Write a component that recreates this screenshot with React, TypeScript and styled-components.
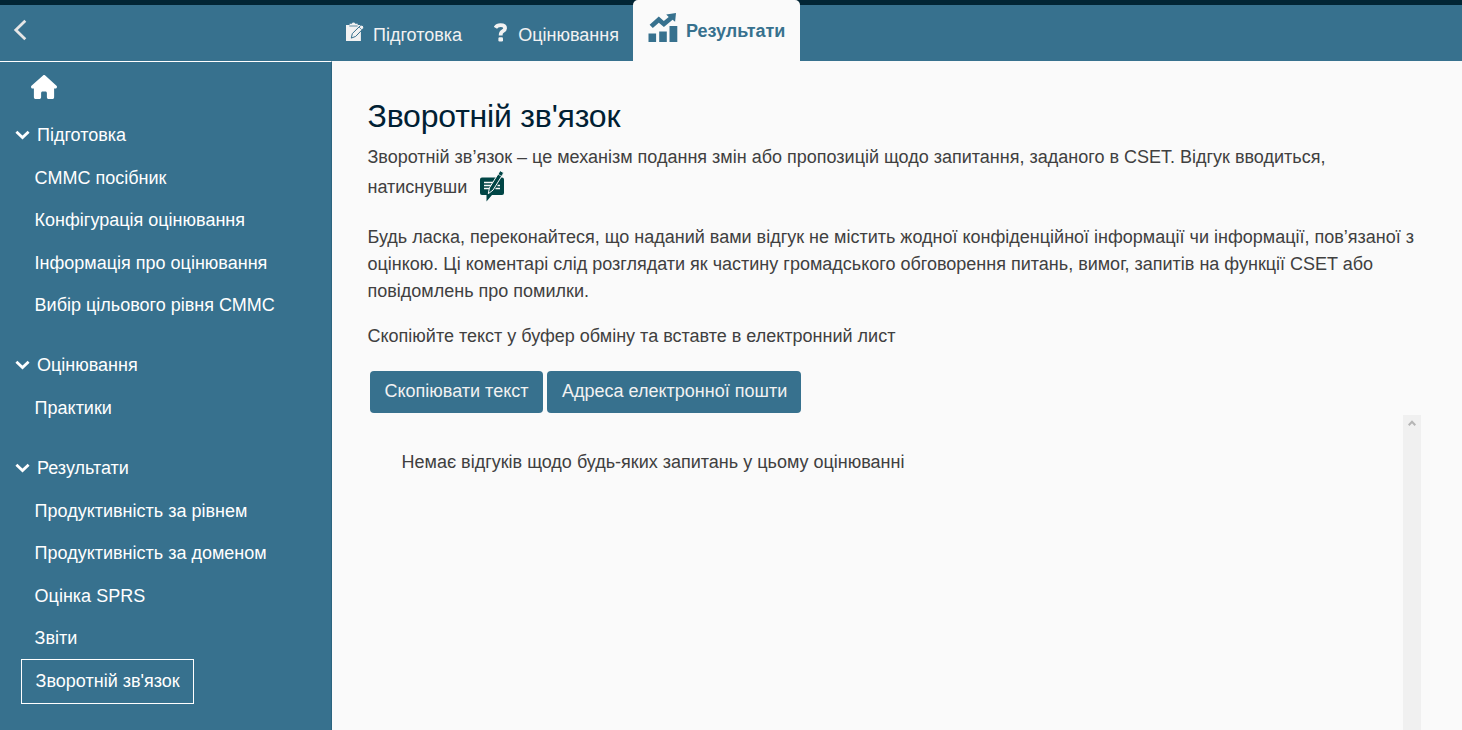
import React from 'react';
import styled, { createGlobalStyle, css } from 'styled-components';
import { FaHouse } from 'react-icons/fa6';

const teal = '#37718e';
const ink = '#002033';
const paper = '#fafafa';

const GlobalStyle = createGlobalStyle`
  *, *::before, *::after { box-sizing: border-box; }
  body {
    margin: 0;
    background: ${paper};
    color: #404040;
    font: 18px/27px "Liberation Sans", Arial, sans-serif;
    overflow: hidden;
  }
`;

const Page = styled.div`
  display: flex;
  flex-direction: column;
  height: 730px;
`;

const Header = styled.header`
  display: flex;
  flex: none;
  height: 61px;
  background: linear-gradient(#022534 5px, ${teal} 5px);
`;

const BackArea = styled.div`
  width: 332px;
  padding: 19px 0 0 13px;
`;

const TabIcon = styled.span<{ $width: number; $inset?: number }>`
  display: flex;
  width: ${(p) => p.$width}px;
  padding: 0 0 7px ${(p) => p.$inset ?? 0}px;
`;

const Tab = styled.div<{ $active?: boolean }>`
  display: flex;
  align-items: center;
  height: 61px;
  padding: 10px 14px 0;
  color: #f2f2f2;
  white-space: nowrap;
  ${(p) =>
    p.$active &&
    css`
      padding: 2px 15px 0;
      background: ${paper};
      border-radius: 5px 5px 0 0;
      color: ${teal};
      font-weight: 700;
    `}
`;

const Body = styled.div`
  display: flex;
  flex: 1;
  min-height: 0;
`;

const Sidebar = styled.nav`
  flex: none;
  width: 332px;
  background: ${teal};
  border-top: 1px solid #fff;
  border-right: 1px solid #2b647f;
  color: #fff;
`;

const HomeLink = styled.div`
  height: 52px;
  padding: 13px 0 0 31px;

  svg {
    display: block;
    width: 26px;
    height: 24px;
  }
`;

const Group = styled.section`
  margin-bottom: 17.75px;
`;

const GroupTitle = styled.div`
  display: flex;
  align-items: center;
  gap: 7px;
  height: 42.5px;
  padding-left: 15px;
`;

const NavItem = styled.div<{ $selected?: boolean }>`
  display: flex;
  align-items: center;
  width: max-content;
  height: 42.5px;
  margin-left: 21px;
  padding: 0.5px 14px 0 13.6px;
  ${(p) =>
    p.$selected &&
    css`
      height: 45px;
      margin-top: -0.5px;
      padding: 0 13.4px 0 13.6px;
      border: 1px solid #fff;
    `}
`;

const Main = styled.main`
  display: flex;
  flex: 1;
  flex-direction: column;
  min-width: 0;
  padding: 36px 41px 0 35.5px;
`;

const Title = styled.h1`
  margin: 0 0 9px;
  color: ${ink};
  font-size: 32px;
  font-weight: 400;
  letter-spacing: -0.2px;
  line-height: 38px;
`;

const Paragraph = styled.p<{ $gap?: number }>`
  margin: 0 0 ${(p) => p.$gap ?? 18}px;
`;

const Actions = styled.div`
  display: flex;
  gap: 4px;
  padding-left: 2px;
`;

const Button = styled.button`
  height: 42px;
  padding: 0 14px 2px 14.5px;
  border: 0;
  border-radius: 4px;
  background: ${teal};
  color: #f2f2f2;
  font: inherit;
  white-space: nowrap;

  &:first-child {
    padding: 0 15px 2px;
  }
`;

const ResultPane = styled.div`
  display: flex;
  flex: 1;
  justify-content: space-between;
  margin-top: 2px;
`;

const EmptyMessage = styled.div`
  padding: 34px 0 0 34px;
`;

const ScrollTrack = styled.div`
  display: flex;
  justify-content: center;
  width: 18px;
  padding-top: 5px;
  background: #f0f0f0;
`;

const InlineSvg = styled.svg`
  margin-left: 8px;
  vertical-align: -9px;
`;

const Block = styled.svg`
  display: block;
  flex: none;
`;

const BackIcon = () => (
  <Block width="14" height="22" viewBox="0 0 14 22" fill="none" stroke="#e6e6e6" strokeWidth="2.8">
    <path d="M12.3 1.7 2.8 11l9.5 9.3" />
  </Block>
);

const Chevron = () => (
  <Block width="15" height="11" viewBox="0 0 15 11" fill="none" stroke="#fff" strokeWidth="2.8">
    <path d="m1.4 1.7 6.1 5.8 6.1-5.8" />
  </Block>
);

const ClipboardIcon = () => (
  <Block width="19" height="20" viewBox="0 0 19 20">
    <path fill="#f2f2f2" d="M0 3h3.6V1.8h2.2Q6.2.4 7.5.4t1.8 1.4h2.4V3h3.2v16H0z" />
    <path fill="none" stroke={teal} strokeWidth=".8" d="M3.3 4h8.3" />
    <path
      fill="#f2f2f2"
      stroke={teal}
      strokeWidth="1"
      d="m5.3 16.1 1-4.5 7.9-7.8q1.7-1.4 3 0t0 2.8l-7.5 7.8z"
    />
    <path fill="none" stroke={teal} strokeWidth=".7" d="m13 5 2.8 2.8" />
  </Block>
);

const QuestionIcon = () => (
  <Block width="14" height="19" viewBox="0 0 14 19">
    <path
      fill="none"
      stroke="#f2f2f2"
      strokeWidth="3.8"
      d="M1.4 4.8Q2.9 2.1 6.5 2.1q4.6 0 4.6 3.2 0 1.6-2.2 2.8-2.2 1.2-2.2 3.8v.6"
    />
    <rect x="4.4" y="14.3" width="4.6" height="4.2" rx="1.2" fill="#f2f2f2" />
  </Block>
);

const ChartIcon = () => (
  <Block width="31" height="30" viewBox="0 0 31 30" fill={teal}>
    <path d="M.5 20.5h7.6V29H.5zM11.2 18.5h7.6V29h-7.6zM21.5 13h7.8v16h-7.8z" />
    <path d="m1.6 11.8 9.2-8.2 5 4.3 4.9-4-2.5-2.500L28 0l-.9 8.800-2.500-2.100-8.700 7.300-5.100-4.200-6 5.300z" />
  </Block>
);

const FeedbackIcon = () => (
  <InlineSvg width="25" height="31" viewBox="0 0 25 31">
    <path fill="#004545" d="M2 6.5h20q2 0 2 2V22q0 2-2 2H12l-5.500 6.600V24H2q-2 0-2-2V8.500q0-2 2-2z" />
    <path fill="none" stroke={paper} strokeWidth="1.3" d="M4 11.500h11M4 14.500h9M4 17.500h6M17.500 14.500H20M15.500 17.500H20" />
    <path
      fill="#004545"
      stroke={paper}
      strokeWidth="1"
      d="M19.2 1.200 20.300-.3l3.300 2L22.800 3.400 13 19.100l-4.700 3.600 1.100-5.800z"
    />
    <path fill="none" stroke={paper} strokeWidth=".7" d="m18 3.200 3.700 2.200" />
  </InlineSvg>
);

const groups = [
  {
    title: 'Підготовка',
    items: ['СММС посібник', 'Конфігурація оцінювання', 'Інформація про оцінювання', 'Вибір цільового рівня СММС'],
  },
  { title: 'Оцінювання', items: ['Практики'] },
  {
    title: 'Результати',
    items: ['Продуктивність за рівнем', 'Продуктивність за доменом', 'Оцінка SPRS', 'Звіти', "Зворотній зв'язок"],
  },
];

export default function App() {
  return (
    <Page>
      <GlobalStyle />
      <Header>
        <BackArea>
          <BackIcon />
        </BackArea>
        <Tab>
          <TabIcon $width={27}><ClipboardIcon /></TabIcon>
          Підготовка
        </Tab>
        <Tab>
          <TabIcon $width={28} $inset={3.5}><QuestionIcon /></TabIcon>
          Оцінювання
        </Tab>
        <Tab $active>
          <TabIcon $width={38}><ChartIcon /></TabIcon>
          Результати
        </Tab>
      </Header>
      <Body>
        <Sidebar>
          <HomeLink><FaHouse preserveAspectRatio="none" /></HomeLink>
          {groups.map((group) => (
            <Group key={group.title}>
              <GroupTitle><Chevron />{group.title}</GroupTitle>
              {group.items.map((item) => (
                <NavItem key={item} $selected={item === "Зворотній зв'язок"}>{item}</NavItem>
              ))}
            </Group>
          ))}
        </Sidebar>
        <Main>
          <Title>Зворотній зв'язок</Title>
          <Paragraph $gap={22}>
            Зворотній зв’язок – це механізм подання змін або пропозицій щодо запитання, заданого в CSET. Відгук
            вводиться, натиснувши <FeedbackIcon />
          </Paragraph>
          <Paragraph>
            Будь ласка, переконайтеся, що наданий вами відгук не містить жодної конфіденційної інформації чи
            інформації, пов’язаної з оцінкою. Ці коментарі слід розглядати як частину громадського обговорення
            питань, вимог, запитів на функції CSET або повідомлень про помилки.
          </Paragraph>
          <Paragraph $gap={21}>Скопіюйте текст у буфер обміну та вставте в електронний лист</Paragraph>
          <Actions>
            <Button>Скопіювати текст</Button>
            <Button>Адреса електронної пошти</Button>
          </Actions>
          <ResultPane>
            <EmptyMessage>Немає відгуків щодо будь-яких запитань у цьому оцінюванні</EmptyMessage>
            <ScrollTrack>
              <Block width="8" height="6" viewBox="0 0 8 6" fill="none" stroke="#b5b5b5" strokeWidth="2">
                <path d="m.7 5.2 3.3-3.5 3.3 3.5" />
              </Block>
            </ScrollTrack>
          </ResultPane>
        </Main>
      </Body>
    </Page>
  );
}
